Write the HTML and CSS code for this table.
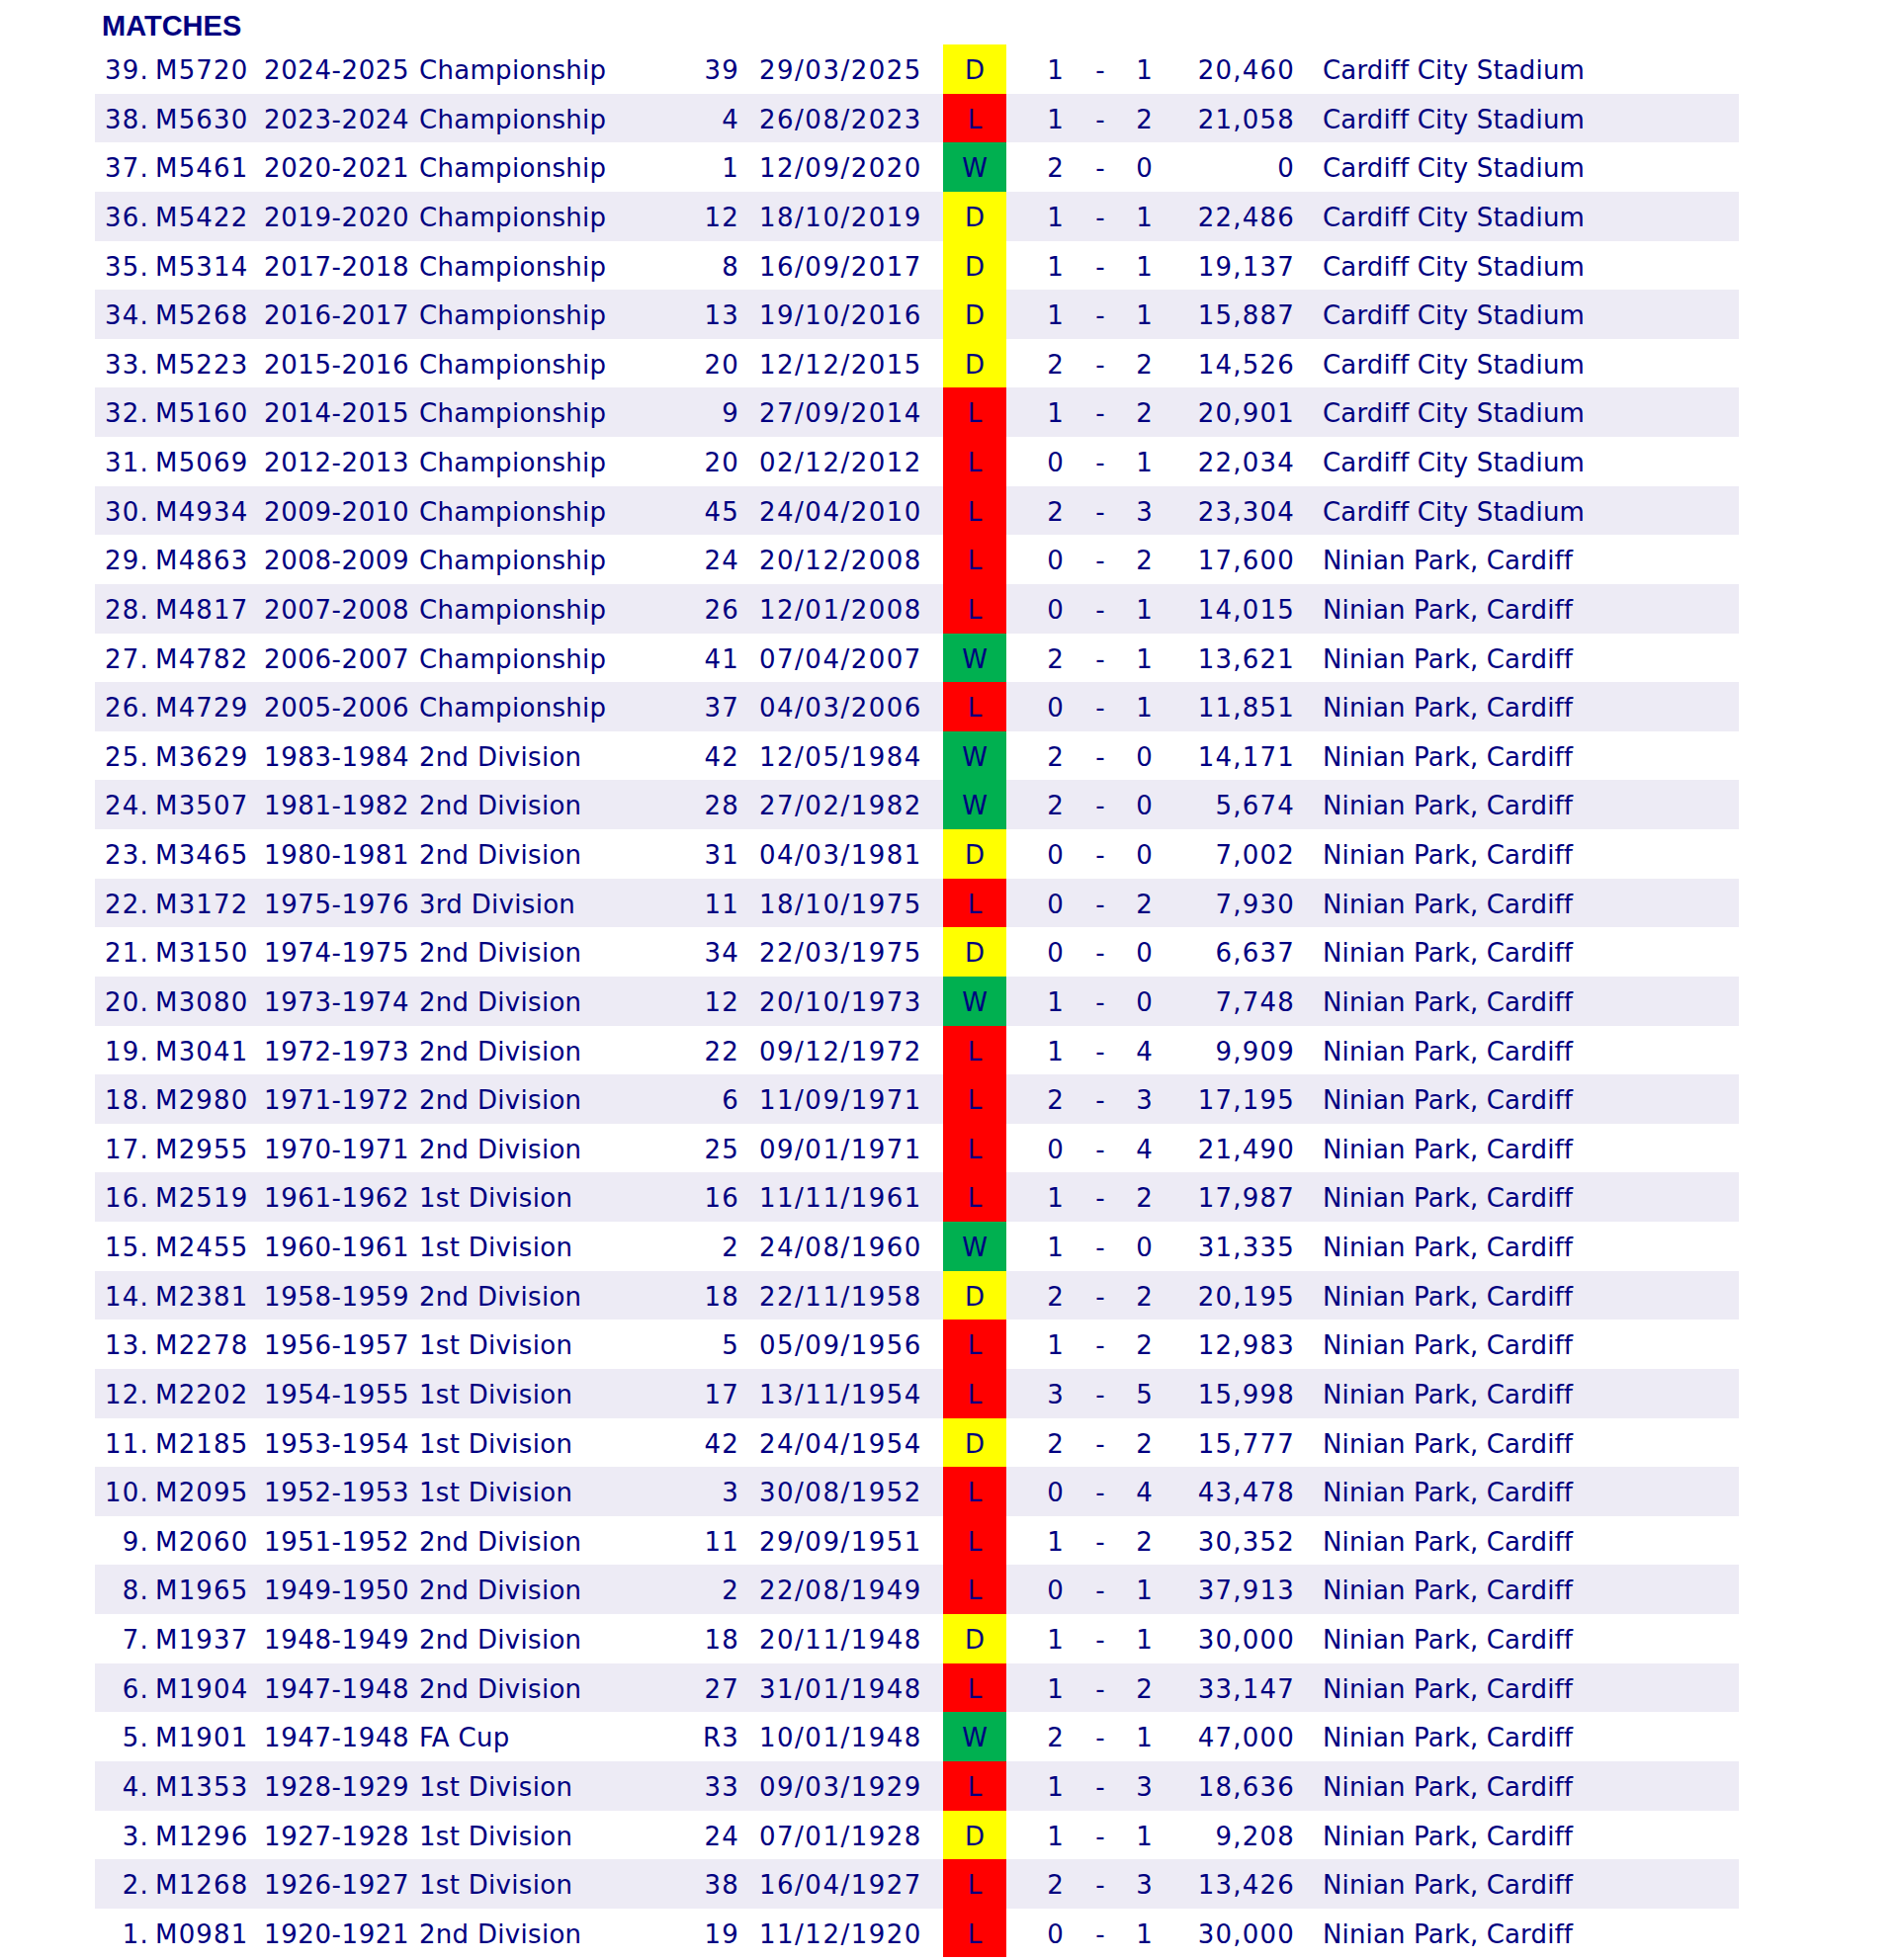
FILE: index.html
```html
<!DOCTYPE html>
<html lang="en">
<head>
<meta charset="utf-8">
<title>Matches</title>
<link rel="stylesheet" href="styles.css">
</head>
<body>
<div class="page">
  <h1 class="title">MATCHES</h1>
  <div class="matches">
    <div class="row"><span class="c idx num">39.</span><span class="c code num">M5720</span><span class="c season num">2024-2025</span><span class="c comp">Championship</span><span class="c pos num">39</span><span class="c date num">29/03/2025</span><span class="c res d">D</span><span class="c s1 num">1</span><span class="c dash">-</span><span class="c s2 num">1</span><span class="c att num">20,460</span><span class="c venue">Cardiff City Stadium</span></div>
    <div class="row alt"><span class="c idx num">38.</span><span class="c code num">M5630</span><span class="c season num">2023-2024</span><span class="c comp">Championship</span><span class="c pos num">4</span><span class="c date num">26/08/2023</span><span class="c res l">L</span><span class="c s1 num">1</span><span class="c dash">-</span><span class="c s2 num">2</span><span class="c att num">21,058</span><span class="c venue">Cardiff City Stadium</span></div>
    <div class="row"><span class="c idx num">37.</span><span class="c code num">M5461</span><span class="c season num">2020-2021</span><span class="c comp">Championship</span><span class="c pos num">1</span><span class="c date num">12/09/2020</span><span class="c res w">W</span><span class="c s1 num">2</span><span class="c dash">-</span><span class="c s2 num">0</span><span class="c att num">0</span><span class="c venue">Cardiff City Stadium</span></div>
    <div class="row alt"><span class="c idx num">36.</span><span class="c code num">M5422</span><span class="c season num">2019-2020</span><span class="c comp">Championship</span><span class="c pos num">12</span><span class="c date num">18/10/2019</span><span class="c res d">D</span><span class="c s1 num">1</span><span class="c dash">-</span><span class="c s2 num">1</span><span class="c att num">22,486</span><span class="c venue">Cardiff City Stadium</span></div>
    <div class="row"><span class="c idx num">35.</span><span class="c code num">M5314</span><span class="c season num">2017-2018</span><span class="c comp">Championship</span><span class="c pos num">8</span><span class="c date num">16/09/2017</span><span class="c res d">D</span><span class="c s1 num">1</span><span class="c dash">-</span><span class="c s2 num">1</span><span class="c att num">19,137</span><span class="c venue">Cardiff City Stadium</span></div>
    <div class="row alt"><span class="c idx num">34.</span><span class="c code num">M5268</span><span class="c season num">2016-2017</span><span class="c comp">Championship</span><span class="c pos num">13</span><span class="c date num">19/10/2016</span><span class="c res d">D</span><span class="c s1 num">1</span><span class="c dash">-</span><span class="c s2 num">1</span><span class="c att num">15,887</span><span class="c venue">Cardiff City Stadium</span></div>
    <div class="row"><span class="c idx num">33.</span><span class="c code num">M5223</span><span class="c season num">2015-2016</span><span class="c comp">Championship</span><span class="c pos num">20</span><span class="c date num">12/12/2015</span><span class="c res d">D</span><span class="c s1 num">2</span><span class="c dash">-</span><span class="c s2 num">2</span><span class="c att num">14,526</span><span class="c venue">Cardiff City Stadium</span></div>
    <div class="row alt"><span class="c idx num">32.</span><span class="c code num">M5160</span><span class="c season num">2014-2015</span><span class="c comp">Championship</span><span class="c pos num">9</span><span class="c date num">27/09/2014</span><span class="c res l">L</span><span class="c s1 num">1</span><span class="c dash">-</span><span class="c s2 num">2</span><span class="c att num">20,901</span><span class="c venue">Cardiff City Stadium</span></div>
    <div class="row"><span class="c idx num">31.</span><span class="c code num">M5069</span><span class="c season num">2012-2013</span><span class="c comp">Championship</span><span class="c pos num">20</span><span class="c date num">02/12/2012</span><span class="c res l">L</span><span class="c s1 num">0</span><span class="c dash">-</span><span class="c s2 num">1</span><span class="c att num">22,034</span><span class="c venue">Cardiff City Stadium</span></div>
    <div class="row alt"><span class="c idx num">30.</span><span class="c code num">M4934</span><span class="c season num">2009-2010</span><span class="c comp">Championship</span><span class="c pos num">45</span><span class="c date num">24/04/2010</span><span class="c res l">L</span><span class="c s1 num">2</span><span class="c dash">-</span><span class="c s2 num">3</span><span class="c att num">23,304</span><span class="c venue">Cardiff City Stadium</span></div>
    <div class="row"><span class="c idx num">29.</span><span class="c code num">M4863</span><span class="c season num">2008-2009</span><span class="c comp">Championship</span><span class="c pos num">24</span><span class="c date num">20/12/2008</span><span class="c res l">L</span><span class="c s1 num">0</span><span class="c dash">-</span><span class="c s2 num">2</span><span class="c att num">17,600</span><span class="c venue">Ninian Park, Cardiff</span></div>
    <div class="row alt"><span class="c idx num">28.</span><span class="c code num">M4817</span><span class="c season num">2007-2008</span><span class="c comp">Championship</span><span class="c pos num">26</span><span class="c date num">12/01/2008</span><span class="c res l">L</span><span class="c s1 num">0</span><span class="c dash">-</span><span class="c s2 num">1</span><span class="c att num">14,015</span><span class="c venue">Ninian Park, Cardiff</span></div>
    <div class="row"><span class="c idx num">27.</span><span class="c code num">M4782</span><span class="c season num">2006-2007</span><span class="c comp">Championship</span><span class="c pos num">41</span><span class="c date num">07/04/2007</span><span class="c res w">W</span><span class="c s1 num">2</span><span class="c dash">-</span><span class="c s2 num">1</span><span class="c att num">13,621</span><span class="c venue">Ninian Park, Cardiff</span></div>
    <div class="row alt"><span class="c idx num">26.</span><span class="c code num">M4729</span><span class="c season num">2005-2006</span><span class="c comp">Championship</span><span class="c pos num">37</span><span class="c date num">04/03/2006</span><span class="c res l">L</span><span class="c s1 num">0</span><span class="c dash">-</span><span class="c s2 num">1</span><span class="c att num">11,851</span><span class="c venue">Ninian Park, Cardiff</span></div>
    <div class="row"><span class="c idx num">25.</span><span class="c code num">M3629</span><span class="c season num">1983-1984</span><span class="c comp">2nd Division</span><span class="c pos num">42</span><span class="c date num">12/05/1984</span><span class="c res w">W</span><span class="c s1 num">2</span><span class="c dash">-</span><span class="c s2 num">0</span><span class="c att num">14,171</span><span class="c venue">Ninian Park, Cardiff</span></div>
    <div class="row alt"><span class="c idx num">24.</span><span class="c code num">M3507</span><span class="c season num">1981-1982</span><span class="c comp">2nd Division</span><span class="c pos num">28</span><span class="c date num">27/02/1982</span><span class="c res w">W</span><span class="c s1 num">2</span><span class="c dash">-</span><span class="c s2 num">0</span><span class="c att num">5,674</span><span class="c venue">Ninian Park, Cardiff</span></div>
    <div class="row"><span class="c idx num">23.</span><span class="c code num">M3465</span><span class="c season num">1980-1981</span><span class="c comp">2nd Division</span><span class="c pos num">31</span><span class="c date num">04/03/1981</span><span class="c res d">D</span><span class="c s1 num">0</span><span class="c dash">-</span><span class="c s2 num">0</span><span class="c att num">7,002</span><span class="c venue">Ninian Park, Cardiff</span></div>
    <div class="row alt"><span class="c idx num">22.</span><span class="c code num">M3172</span><span class="c season num">1975-1976</span><span class="c comp">3rd Division</span><span class="c pos num">11</span><span class="c date num">18/10/1975</span><span class="c res l">L</span><span class="c s1 num">0</span><span class="c dash">-</span><span class="c s2 num">2</span><span class="c att num">7,930</span><span class="c venue">Ninian Park, Cardiff</span></div>
    <div class="row"><span class="c idx num">21.</span><span class="c code num">M3150</span><span class="c season num">1974-1975</span><span class="c comp">2nd Division</span><span class="c pos num">34</span><span class="c date num">22/03/1975</span><span class="c res d">D</span><span class="c s1 num">0</span><span class="c dash">-</span><span class="c s2 num">0</span><span class="c att num">6,637</span><span class="c venue">Ninian Park, Cardiff</span></div>
    <div class="row alt"><span class="c idx num">20.</span><span class="c code num">M3080</span><span class="c season num">1973-1974</span><span class="c comp">2nd Division</span><span class="c pos num">12</span><span class="c date num">20/10/1973</span><span class="c res w">W</span><span class="c s1 num">1</span><span class="c dash">-</span><span class="c s2 num">0</span><span class="c att num">7,748</span><span class="c venue">Ninian Park, Cardiff</span></div>
    <div class="row"><span class="c idx num">19.</span><span class="c code num">M3041</span><span class="c season num">1972-1973</span><span class="c comp">2nd Division</span><span class="c pos num">22</span><span class="c date num">09/12/1972</span><span class="c res l">L</span><span class="c s1 num">1</span><span class="c dash">-</span><span class="c s2 num">4</span><span class="c att num">9,909</span><span class="c venue">Ninian Park, Cardiff</span></div>
    <div class="row alt"><span class="c idx num">18.</span><span class="c code num">M2980</span><span class="c season num">1971-1972</span><span class="c comp">2nd Division</span><span class="c pos num">6</span><span class="c date num">11/09/1971</span><span class="c res l">L</span><span class="c s1 num">2</span><span class="c dash">-</span><span class="c s2 num">3</span><span class="c att num">17,195</span><span class="c venue">Ninian Park, Cardiff</span></div>
    <div class="row"><span class="c idx num">17.</span><span class="c code num">M2955</span><span class="c season num">1970-1971</span><span class="c comp">2nd Division</span><span class="c pos num">25</span><span class="c date num">09/01/1971</span><span class="c res l">L</span><span class="c s1 num">0</span><span class="c dash">-</span><span class="c s2 num">4</span><span class="c att num">21,490</span><span class="c venue">Ninian Park, Cardiff</span></div>
    <div class="row alt"><span class="c idx num">16.</span><span class="c code num">M2519</span><span class="c season num">1961-1962</span><span class="c comp">1st Division</span><span class="c pos num">16</span><span class="c date num">11/11/1961</span><span class="c res l">L</span><span class="c s1 num">1</span><span class="c dash">-</span><span class="c s2 num">2</span><span class="c att num">17,987</span><span class="c venue">Ninian Park, Cardiff</span></div>
    <div class="row"><span class="c idx num">15.</span><span class="c code num">M2455</span><span class="c season num">1960-1961</span><span class="c comp">1st Division</span><span class="c pos num">2</span><span class="c date num">24/08/1960</span><span class="c res w">W</span><span class="c s1 num">1</span><span class="c dash">-</span><span class="c s2 num">0</span><span class="c att num">31,335</span><span class="c venue">Ninian Park, Cardiff</span></div>
    <div class="row alt"><span class="c idx num">14.</span><span class="c code num">M2381</span><span class="c season num">1958-1959</span><span class="c comp">2nd Division</span><span class="c pos num">18</span><span class="c date num">22/11/1958</span><span class="c res d">D</span><span class="c s1 num">2</span><span class="c dash">-</span><span class="c s2 num">2</span><span class="c att num">20,195</span><span class="c venue">Ninian Park, Cardiff</span></div>
    <div class="row"><span class="c idx num">13.</span><span class="c code num">M2278</span><span class="c season num">1956-1957</span><span class="c comp">1st Division</span><span class="c pos num">5</span><span class="c date num">05/09/1956</span><span class="c res l">L</span><span class="c s1 num">1</span><span class="c dash">-</span><span class="c s2 num">2</span><span class="c att num">12,983</span><span class="c venue">Ninian Park, Cardiff</span></div>
    <div class="row alt"><span class="c idx num">12.</span><span class="c code num">M2202</span><span class="c season num">1954-1955</span><span class="c comp">1st Division</span><span class="c pos num">17</span><span class="c date num">13/11/1954</span><span class="c res l">L</span><span class="c s1 num">3</span><span class="c dash">-</span><span class="c s2 num">5</span><span class="c att num">15,998</span><span class="c venue">Ninian Park, Cardiff</span></div>
    <div class="row"><span class="c idx num">11.</span><span class="c code num">M2185</span><span class="c season num">1953-1954</span><span class="c comp">1st Division</span><span class="c pos num">42</span><span class="c date num">24/04/1954</span><span class="c res d">D</span><span class="c s1 num">2</span><span class="c dash">-</span><span class="c s2 num">2</span><span class="c att num">15,777</span><span class="c venue">Ninian Park, Cardiff</span></div>
    <div class="row alt"><span class="c idx num">10.</span><span class="c code num">M2095</span><span class="c season num">1952-1953</span><span class="c comp">1st Division</span><span class="c pos num">3</span><span class="c date num">30/08/1952</span><span class="c res l">L</span><span class="c s1 num">0</span><span class="c dash">-</span><span class="c s2 num">4</span><span class="c att num">43,478</span><span class="c venue">Ninian Park, Cardiff</span></div>
    <div class="row"><span class="c idx num">9.</span><span class="c code num">M2060</span><span class="c season num">1951-1952</span><span class="c comp">2nd Division</span><span class="c pos num">11</span><span class="c date num">29/09/1951</span><span class="c res l">L</span><span class="c s1 num">1</span><span class="c dash">-</span><span class="c s2 num">2</span><span class="c att num">30,352</span><span class="c venue">Ninian Park, Cardiff</span></div>
    <div class="row alt"><span class="c idx num">8.</span><span class="c code num">M1965</span><span class="c season num">1949-1950</span><span class="c comp">2nd Division</span><span class="c pos num">2</span><span class="c date num">22/08/1949</span><span class="c res l">L</span><span class="c s1 num">0</span><span class="c dash">-</span><span class="c s2 num">1</span><span class="c att num">37,913</span><span class="c venue">Ninian Park, Cardiff</span></div>
    <div class="row"><span class="c idx num">7.</span><span class="c code num">M1937</span><span class="c season num">1948-1949</span><span class="c comp">2nd Division</span><span class="c pos num">18</span><span class="c date num">20/11/1948</span><span class="c res d">D</span><span class="c s1 num">1</span><span class="c dash">-</span><span class="c s2 num">1</span><span class="c att num">30,000</span><span class="c venue">Ninian Park, Cardiff</span></div>
    <div class="row alt"><span class="c idx num">6.</span><span class="c code num">M1904</span><span class="c season num">1947-1948</span><span class="c comp">2nd Division</span><span class="c pos num">27</span><span class="c date num">31/01/1948</span><span class="c res l">L</span><span class="c s1 num">1</span><span class="c dash">-</span><span class="c s2 num">2</span><span class="c att num">33,147</span><span class="c venue">Ninian Park, Cardiff</span></div>
    <div class="row"><span class="c idx num">5.</span><span class="c code num">M1901</span><span class="c season num">1947-1948</span><span class="c comp">FA Cup</span><span class="c pos num">R3</span><span class="c date num">10/01/1948</span><span class="c res w">W</span><span class="c s1 num">2</span><span class="c dash">-</span><span class="c s2 num">1</span><span class="c att num">47,000</span><span class="c venue">Ninian Park, Cardiff</span></div>
    <div class="row alt"><span class="c idx num">4.</span><span class="c code num">M1353</span><span class="c season num">1928-1929</span><span class="c comp">1st Division</span><span class="c pos num">33</span><span class="c date num">09/03/1929</span><span class="c res l">L</span><span class="c s1 num">1</span><span class="c dash">-</span><span class="c s2 num">3</span><span class="c att num">18,636</span><span class="c venue">Ninian Park, Cardiff</span></div>
    <div class="row"><span class="c idx num">3.</span><span class="c code num">M1296</span><span class="c season num">1927-1928</span><span class="c comp">1st Division</span><span class="c pos num">24</span><span class="c date num">07/01/1928</span><span class="c res d">D</span><span class="c s1 num">1</span><span class="c dash">-</span><span class="c s2 num">1</span><span class="c att num">9,208</span><span class="c venue">Ninian Park, Cardiff</span></div>
    <div class="row alt"><span class="c idx num">2.</span><span class="c code num">M1268</span><span class="c season num">1926-1927</span><span class="c comp">1st Division</span><span class="c pos num">38</span><span class="c date num">16/04/1927</span><span class="c res l">L</span><span class="c s1 num">2</span><span class="c dash">-</span><span class="c s2 num">3</span><span class="c att num">13,426</span><span class="c venue">Ninian Park, Cardiff</span></div>
    <div class="row"><span class="c idx num">1.</span><span class="c code num">M0981</span><span class="c season num">1920-1921</span><span class="c comp">2nd Division</span><span class="c pos num">19</span><span class="c date num">11/12/1920</span><span class="c res l">L</span><span class="c s1 num">0</span><span class="c dash">-</span><span class="c s2 num">1</span><span class="c att num">30,000</span><span class="c venue">Ninian Park, Cardiff</span></div>
  </div>
</div>
</body>
</html>
```

FILE: styles.css
```css
html, body {
  margin: 0;
  padding: 0;
  background: #ffffff;
}

.page {
  padding-left: 96px;
  color: #000080;
  font-family: "DejaVu Sans", Verdana, sans-serif;
}

.title {
  margin: 0;
  height: 45px;
  box-sizing: border-box;
  padding: 7px 0 0 7px;
  line-height: 38px;
  font-family: "Liberation Sans", Arial, sans-serif;
  font-weight: bold;
  font-size: 29px;
  color: #000080;
}

.matches {
  width: 1663px;
}

.row {
  display: grid;
  grid-template-columns: 56px 110px 158px 280px 50px 204px 64px 80px 30px 60px 122px 449px;
  height: 49.64px;
  font-size: 26px;
  line-height: 49.64px;
  white-space: nowrap;
}

.row.alt {
  background: #edebf5;
}

.c {
  display: block;
  box-sizing: border-box;
  padding-top: 2px;
  overflow: visible;
}

.num {
  letter-spacing: 1.2px;
}

.idx {
  text-align: right;
  padding-right: 1px;
}

.code {
  padding-left: 5px;
}

.season {
  padding-left: 5px;
  letter-spacing: 0.6px;
}

.comp {
  padding-left: 4px;
  letter-spacing: 0.3px;
}

.pos {
  text-align: right;
  padding-right: 2px;
}

.date {
  padding-left: 18px;
  letter-spacing: 1.5px;
}

.res {
  text-align: center;
}

.res.d {
  background: #ffff00;
}

.res.l {
  background: #ff0000;
}

.res.w {
  background: #00b050;
}

.s1 {
  text-align: center;
  padding-left: 20px;
}

.dash {
  text-align: center;
}

.s2 {
  text-align: center;
}

.att {
  text-align: right;
}

.venue {
  padding-left: 28px;
  letter-spacing: 0.15px;
}
```
